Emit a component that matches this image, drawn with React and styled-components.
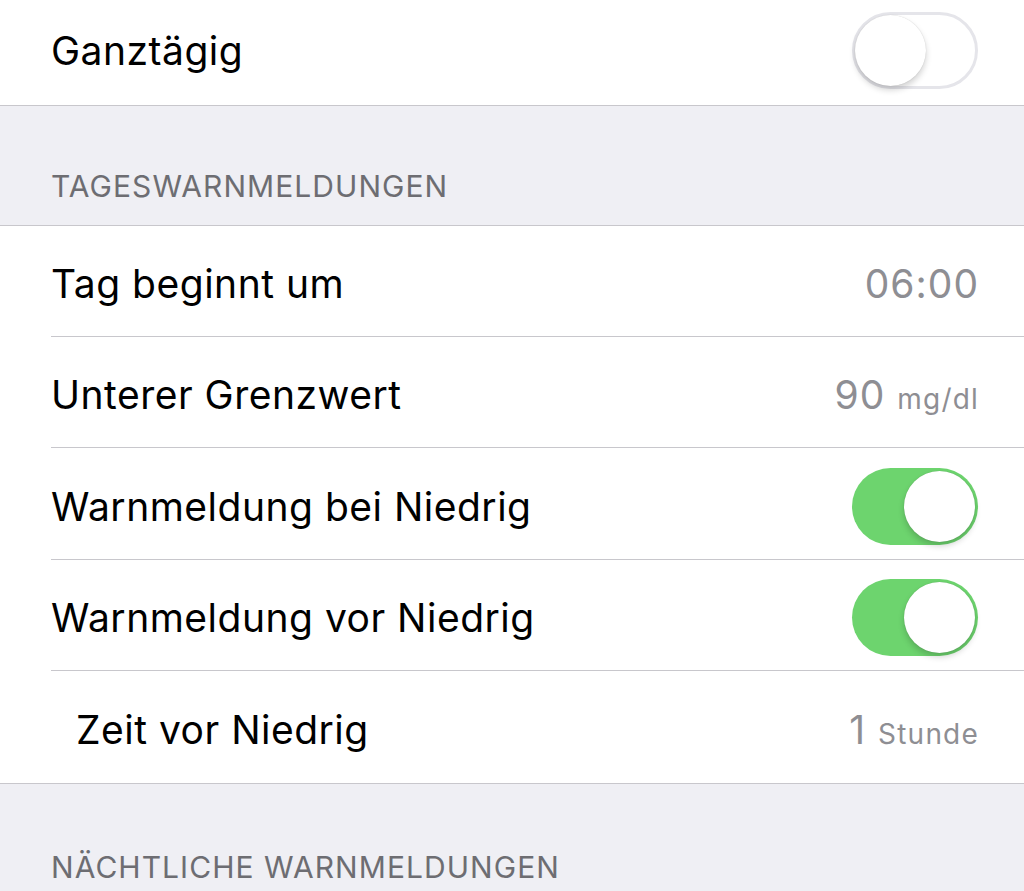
import React from "react";
import styled, { createGlobalStyle } from "styled-components";

const GlobalStyle = createGlobalStyle`
  html, body {
    margin: 0;
    padding: 0;
    background: #efeff4;
    font-family: "Inter", "Roboto", "Liberation Sans", sans-serif;
    -webkit-font-smoothing: antialiased;
  }
`;

function Toggle({ on }) {
  return (
    <Track $on={on}>
      <Knob $on={on} />
    </Track>
  );
}

function App() {
  return (
    <Page>
      <GlobalStyle />
      <Group>
        <Row $height={105} $shift={5} $last>
          <Label>Ganztägig</Label>
          <Toggle on={false} />
        </Row>
      </Group>

      <SectionHeader>TAGESWARNMELDUNGEN</SectionHeader>
      <Group>
        <Row>
          <Label>Tag beginnt um</Label>
          <Value>06:00</Value>
        </Row>
        <Row>
          <Label>Unterer Grenzwert</Label>
          <Value>
            90 <Unit>mg/dl</Unit>
          </Value>
        </Row>
        <Row $height={112}>
          <Label>Warnmeldung bei Niedrig</Label>
          <Toggle on />
        </Row>
        <Row>
          <Label>Warnmeldung vor Niedrig</Label>
          <Toggle on />
        </Row>
        <Row $height={112} $last>
          <Label $indent>Zeit vor Niedrig</Label>
          <Value>
            1 <Unit>Stunde</Unit>
          </Value>
        </Row>
      </Group>

      <SectionHeader $bottom>NÄCHTLICHE WARNMELDUNGEN</SectionHeader>
    </Page>
  );
}

export default App;

const Page = styled.div`
  width: 1024px;
  height: 891px;
  overflow: hidden;
  background: #efeff4;
`;

const Group = styled.div`
  background: #ffffff;
  border-bottom: 1px solid #c8c7cc;
`;

const SectionHeader = styled.div`
  height: ${(p) => (p.$bottom ? "108px" : "120px")};
  box-sizing: border-box;
  display: flex;
  align-items: flex-end;
  padding: 0 51px ${(p) => (p.$bottom ? "7px" : "21px")};
  font-size: 30px;
  letter-spacing: 1.05px;
  color: #6d6d72;
  border-bottom: ${(p) => (p.$bottom ? "none" : "1px solid #c8c7cc")};
`;

const Row = styled.div`
  position: relative;
  box-sizing: border-box;
  height: ${(p) => (p.$height ? `${p.$height}px` : "111px")};
  display: flex;
  align-items: center;
  justify-content: space-between;
  padding: 0 47px 0 51px;
  padding-bottom: ${(p) => (p.$shift ? `${p.$shift}px` : "0")};
  padding-top: ${(p) => (p.$shift ? "0" : "4px")};

  &::after {
    content: "";
    display: ${(p) => (p.$last ? "none" : "block")};
    position: absolute;
    left: 51px;
    right: 0;
    bottom: 0;
    height: 1px;
    background: #c8c7cc;
  }
`;

const Label = styled.span`
  font-size: 39px;
  color: #000000;
  letter-spacing: 0.5px;
  padding-left: ${(p) => (p.$indent ? "25px" : "0")};
`;

const Value = styled.span`
  font-size: 39px;
  color: #8e8e93;
  letter-spacing: 1px;
  margin-right: -2px;
`;

const Unit = styled.span`
  font-size: 28px;
  letter-spacing: 1.2px;
`;

const Track = styled.div`
  position: relative;
  width: 126px;
  height: 77px;
  box-sizing: border-box;
  border-radius: 39px;
  background: ${(p) => (p.$on ? "#6dd46e" : "#ffffff")};
  border: ${(p) => (p.$on ? "none" : "3px solid #e5e5ea")};
  margin-right: -1px;
`;

const Knob = styled.div`
  position: absolute;
  top: ${(p) => (p.$on ? "3px" : "0")};
  left: ${(p) => (p.$on ? "52px" : "0")};
  width: 71px;
  height: 71px;
  border-radius: 50%;
  background: #ffffff;
  box-shadow: 0 4px 6px rgba(0, 0, 0, 0.18), 0 0 1px rgba(0, 0, 0, 0.2);
`;
